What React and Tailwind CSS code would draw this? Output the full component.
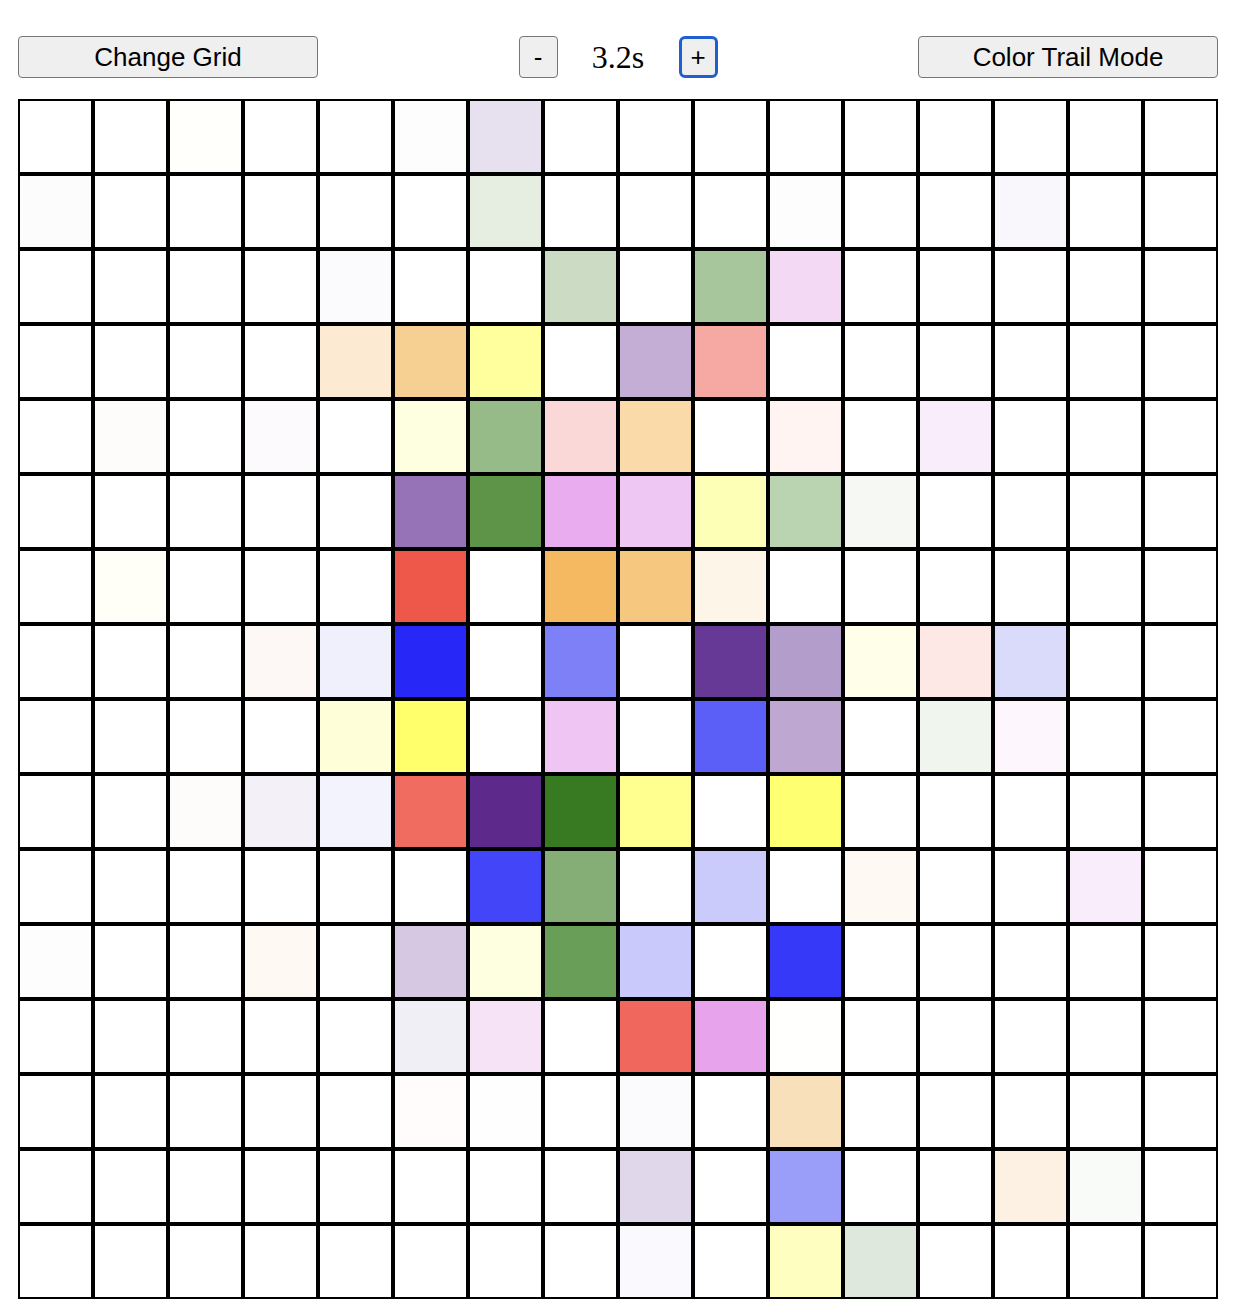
const W = "#ffffff";
const rows = [
  [W, W, "#fffffb", W, W, "#fdfdfd", "#e7e0ee", W, W, W, W, W, W, W, W, W],
  ["#fcfcfc", W, W, W, W, W, "#e6eee2", W, W, W, "#fdfdfd", W, W, "#f9f7fc", W, W],
  [W, W, W, W, "#fbfbfd", W, W, "#ccdcc4", W, "#a7c69c", "#f4d9f5", W, W, W, W, W],
  [W, W, W, W, "#fcead2", "#f6d092", "#ffff9e", W, "#c4aed5", "#f5a9a2", W, W, W, W, W, W],
  [W, "#fdfcfa", W, "#fcfafd", W, "#fefee0", "#96ba88", "#fbd8d8", "#fadaa8", W, "#fff4f2", W, "#f9ecfb", W, W, W],
  [W, W, W, W, W, "#9673b6", "#5d9448", "#e9acee", "#eec7f3", "#feffb6", "#bad4b2", "#f6f8f4", W, W, W, W],
  [W, "#fffff8", W, W, W, "#ee584b", W, "#f4b961", "#f6c77f", "#fef5e9", W, W, W, W, W, W],
  [W, W, W, "#fdf8f5", "#f0f0fc", "#2727f8", W, "#7e80f8", W, "#673996", "#b39dca", "#fefee9", "#fde8e6", "#dadafb", W, W],
  [W, W, W, W, "#fefed8", "#ffff6c", W, "#efc5f3", W, "#5c5ef8", "#bea7d0", W, "#f0f5ee", "#fdf6fc", W, W],
  [W, W, "#fdfcfa", "#f3f1f7", "#f3f3fd", "#f06c61", "#5d2a8c", "#377a22", "#ffff90", W, "#ffff72", W, W, W, W, W],
  [W, W, W, W, W, W, "#4345f8", "#85ae77", W, "#cbcbfb", W, "#fef9f3", W, W, "#f9ecfb", W],
  ["#fdfdfd", W, W, "#fef9f3", W, "#d6c8e2", "#fefee0", "#689e58", "#c9c9fb", W, "#3739f8", W, W, W, W, W],
  [W, W, W, W, W, "#f1eff6", "#f6e3f6", W, "#f0675d", "#e7a3ec", "#fffffd", W, W, W, W, W],
  [W, W, W, W, W, "#fffcfb", "#fefefe", W, "#fbfbfe", W, "#f8e0bb", W, W, W, W, W],
  [W, W, W, W, W, W, W, W, "#e0d8ea", W, "#9b9ef8", W, W, "#fcf1e3", "#f9fbf8", W],
  [W, W, W, W, W, W, W, W, "#faf9fe", W, "#fdfebf", "#dfe8dc", W, W, W, W],
];

export default function App() {
  return (
    <div className="bg-white w-[1234px] min-h-[1312px] pt-[36px] px-[18px]" style={{ fontFamily: '"Liberation Sans", Arial, sans-serif' }}>
      <div className="w-[1200px] flex items-center justify-between h-[42px]">
        <button className="w-[300px] h-[42px] bg-[#efefef] border border-[#767676] rounded-[4px] text-[26px] text-black leading-none">
          Change Grid
        </button>
        <div className="flex items-center">
          <button className="w-[39px] h-[42px] bg-[#efefef] border border-[#767676] rounded-[4px] text-[26px] text-black leading-none">
            -
          </button>
          <span className="w-[121px] text-center text-[32px] text-black leading-none" style={{ fontFamily: '"Liberation Serif", "Times New Roman", serif' }}>
            3.2s
          </span>
          <button className="w-[39px] h-[42px] bg-[#efefef] border-[3px] border-[#1f5fd0] rounded-[6px] text-[26px] text-black leading-none">
            +
          </button>
        </div>
        <button className="w-[300px] h-[42px] bg-[#efefef] border border-[#767676] rounded-[4px] text-[26px] text-black leading-none">
          Color Trail Mode
        </button>
      </div>
      <div className="mt-[21px] w-[1200px] grid grid-cols-16">
        {rows.flatMap((row, r) =>
          row.map((c, i) => (
            <div
              key={r + "-" + i}
              className="w-[75px] h-[75px] border-2 border-black box-border"
              style={{ backgroundColor: c }}
            />
          ))
        )}
      </div>
    </div>
  );
}
